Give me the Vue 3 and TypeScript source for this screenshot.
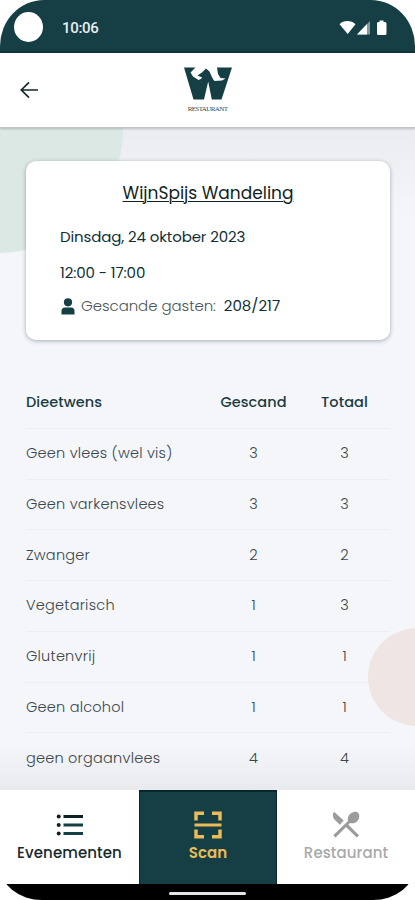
<script setup lang="ts">
interface DietRow {
  name: string
  scanned: number
  total: number
}

const rows: DietRow[] = [
  { name: 'Geen vlees (wel vis)', scanned: 3, total: 3 },
  { name: 'Geen varkensvlees', scanned: 3, total: 3 },
  { name: 'Zwanger', scanned: 2, total: 2 },
  { name: 'Vegetarisch', scanned: 1, total: 3 },
  { name: 'Glutenvrij', scanned: 1, total: 1 },
  { name: 'Geen alcohol', scanned: 1, total: 1 },
  { name: 'geen orgaanvlees', scanned: 4, total: 4 },
]
</script>

<template>
  <div class="phone">
    <header class="status">
      <span class="camera"></span>
      <span class="clock">10:06</span>
      <svg class="signals" width="50" height="18" viewBox="0 0 50 18">
        <path d="M.5 6.200C4.500 1.900 12 1.900 16.500 6.200L8.700 16Z" fill="#fff" />
        <path d="M18 16.500 31 3V16.500Z" fill="#84999c" />
        <path d="M18 16.500 28 6V16.500Z" fill="#fff" />
        <path d="M39 4H40.500V2.500H44.500V4H46Q47.500 4 47.500 5.500V15.500Q47.500 17 46 17H39.500Q38 17 38 15.500V5.500Q38 4 39 4Z" fill="#fff" />
      </svg>
    </header>

    <div class="topbar">
      <svg class="back" width="20" height="18" viewBox="0 0 20 18">
        <path d="M10 1.300 2.300 9 10 16.700M2.500 9H19" fill="none" stroke="#17282b" stroke-width="1.700" />
      </svg>
      <div class="brand">
        <svg width="48" height="33" viewBox="0 0 48 33">
          <path fill="#153f45" d="M0 .5H11.500L6.500 5.500 9 9.500 14.500 13 19 11 28 11 30.500 14 38 13.500 41.500 11.500 36.500 11 34 7 33 .5H48L37.500 32.500H27.800L24.200 14.500 20 32.500H9.500Z" />
          <path fill="#153f45" d="M13.500 8.500 18 5.500 22 1.500 25.500 4.500 29 12.500 25 15 17 13 18 10.500Z" />
        </svg>
        <span class="brand-name">RESTAURANT</span>
      </div>
    </div>

    <main class="content">
      <div class="blob green"></div>
      <div class="fade"></div>
      <section class="card">
        <h1>WijnSpijs Wandeling</h1>
        <p class="date">Dinsdag, 24 oktober 2023</p>
        <p class="time">12:00 - 17:00</p>
        <p class="guests">
          <svg width="14" height="17" viewBox="0 0 14 17" fill="#153f45">
            <circle cx="7" cy="4.300" r="4.100" />
            <path d="M.5 16.500V13Q.5 9.500 4 9.500H10Q13.500 9.500 13.500 13V16.500Z" />
          </svg>
          <span class="label">Gescande gasten:</span>
          <span class="count">208/217</span>
        </p>
      </section>

      <section class="diets">
        <div class="row head">
          <span class="head-name">Dieetwens</span><span class="num">Gescand</span><span class="num">Totaal</span>
        </div>
        <div v-for="row in rows" :key="row.name" class="row">
          <span class="name">{{ row.name }}</span>
          <span class="num">{{ row.scanned }}</span>
          <span class="num">{{ row.total }}</span>
        </div>
      </section>
      <div class="blob pink"></div>
    </main>

    <nav class="tabs">
      <a class="tab events">
        <svg width="28" height="28" viewBox="0 0 28 28" fill="#153f45">
          <g fill="#0d2023"><circle cx="2.700" cy="5.500" r="2" /><circle cx="2.700" cy="14" r="2" /><circle cx="2.700" cy="22.500" r="2" /></g>
          <path d="M7.500 4H27V7H7.500Z" fill="#0d2023" />
          <path d="M7.500 12.500H27V15.500H7.500ZM7.500 21H27V24H7.500Z" />
        </svg>
        <span>Evenementen</span>
      </a>
      <a class="tab scan">
        <svg width="28" height="28" viewBox="0 0 28 28" fill="none" stroke="#eabb58" stroke-width="3.500">
          <path d="M2 9.500V2.200H10M18 2.200H26V9.500M26 18.500V25.800H18M10 25.800H2V18.500" />
          <path d="M.5 14H27.500" stroke-width="3" />
        </svg>
        <span>Scan</span>
      </a>
      <a class="tab restaurant">
        <svg width="28" height="28" viewBox="0 0 28 28" fill="#9b9b9b">
          <path d="M2 .8 11.700 9.500 7.800 13.700 2.500 8.500Q-.5 5 2 .8Z" />
          <path d="M16 10C15 5.500 18 1.500 22 .9C26 .3 28 3 27 7C26 11 22 13.200 18 12L16.300 13.700 27 24.300 24.800 26.500 14 16 3.500 26.500 1.300 24.300Z" />
        </svg>
        <span>Restaurant</span>
      </a>
    </nav>
    <footer class="gesture"><span></span></footer>
  </div>
</template>

<style>
body {
  background: #fff;
}
</style>

<style scoped>
.phone {
  width: 415px;
  height: 900px;
  display: flex;
  flex-direction: column;
  overflow: hidden;
  border-radius: 44px 44px 42px 42px / 46px 46px 34px 34px;
  background: #fff;
  font-family: Poppins, Inter, sans-serif;
  color: #153f45;
}
.status {
  height: 53px;
  box-sizing: border-box;
  flex: none;
  display: flex;
  align-items: center;
  padding: 3px 26px 0 14px;
  background: #153f45;
  border-bottom: 2px solid #0f353b;
}
.camera {
  width: 29px;
  height: 30px;
  border-radius: 50%;
  background: #fff;
}
.clock {
  margin-left: 19px;
  font: 500 15px Roboto, sans-serif;
  letter-spacing: -0.3px;
  color: #e9eef0;
  padding-top: 2px;
}
.signals {
  margin-left: auto;
}
.topbar {
  position: relative;
  z-index: 1;
  height: 75px;
  flex: none;
  display: grid;
  grid-template-columns: 1fr auto 1fr;
  align-items: center;
  background: #fff;
  border-bottom: 1px solid #c1c5c8;
  box-sizing: border-box;
  box-shadow: 0 1px 2px rgba(40, 50, 60, 0.25);
}
.back {
  margin-left: 19px;
}
.brand {
  display: flex;
  flex-direction: column;
  align-items: center;
  gap: 5px;
}
.brand svg {
  display: block;
}
.brand-name {
  font: 400 7px/8px 'Liberation Serif', serif;
  letter-spacing: -0.6px;
  color: #33484c;
}
.content {
  position: relative;
  flex: 1;
  min-height: 0;
  overflow: hidden;
  padding: 33px 25px 0 26px;
  background: linear-gradient(#ebecf0, #f4f6fa 90px);
}
.blob {
  position: absolute;
  border-radius: 50%;
}
.green {
  left: -125px;
  top: -123px;
  width: 248px;
  height: 248px;
  background: #dce8e4;
}
.pink {
  left: 367.5px;
  top: 500px;
  width: 98px;
  height: 98px;
  background: #efe6e4;
}
.card {
  position: relative;
  height: 179px;
  box-sizing: border-box;
  padding: 19px 34px 0;
  background: #fff;
  border-radius: 10px;
  box-shadow: 0 1px 4px rgba(40, 45, 70, 0.38);
}
.card h1 {
  margin: 0;
  text-align: center;
  font-size: 17px;
  line-height: 26px;
  font-weight: 400;
  color: #101f22;
  text-decoration: underline;
  text-underline-offset: 2px;
  text-decoration-thickness: 1px;
  white-space: nowrap;
}
.card p {
  margin: 0;
  font-size: 15px;
  line-height: 24px;
  white-space: nowrap;
}
.card .date,
.card .time {
  margin-top: 19px;
  color: #0f3036;
  letter-spacing: -0.12px;
}
.card .time {
  margin-top: 12px;
}
.card .guests {
  margin-top: 9px;
  display: flex;
  align-items: center;
}
.guests svg {
  margin-left: 1px;
}
.label {
  margin-left: 6px;
  font-weight: 300;
  letter-spacing: -0.07px;
  color: #4b5658;
}
.count {
  margin-left: 8px;
  color: #0f3036;
}
.diets {
  position: relative;
  padding-top: 38px;
}
.row {
  display: grid;
  grid-template-columns: 2fr 1fr 1fr;
  align-items: center;
  height: 50.75px;
  box-sizing: border-box;
  border-bottom: 1px solid #ebedf0;
  font-size: 14.5px;
  font-weight: 300;
  color: #3a464a;
  white-space: nowrap;
}
.row.head {
  font-weight: 500;
  color: #1b3b40;
}
.head-name,
.head .num {
  letter-spacing: 0.08px;
}
.name {
  letter-spacing: 0.22px;
}
.num {
  text-align: center;
}
.fade {
  position: absolute;
  left: 0;
  right: 0;
  bottom: 0;
  height: 45px;
  background: linear-gradient(rgba(230, 232, 236, 0), rgba(230, 232, 236, 0.85));
}
.tabs {
  height: 94px;
  flex: none;
  display: grid;
  grid-template-columns: 139px 138px 138px;
}
.tab {
  display: flex;
  flex-direction: column;
  align-items: center;
  padding-top: 21px;
  box-sizing: border-box;
  font-size: 15px;
  line-height: 24px;
  font-weight: 500;
  letter-spacing: 0.08px;
  color: #17282b;
}
.tab svg {
  flex: none;
  margin-bottom: 2px;
}
.scan {
  background: #153f45;
  border: 1px solid #08272c;
  border-top-width: 2px;
  border-bottom: 0;
  padding-top: 19px;
  color: #eabb58;
  font-weight: 600;
}
.restaurant {
  color: #a9a9a9;
}
.gesture {
  flex: none;
  height: 16px;
  display: flex;
  justify-content: center;
  align-items: center;
  background: #000;
}
.gesture span {
  width: 77px;
  height: 3px;
  border-radius: 2px;
  background: #e4e4e4;
  margin-top: 2px;
}
</style>
